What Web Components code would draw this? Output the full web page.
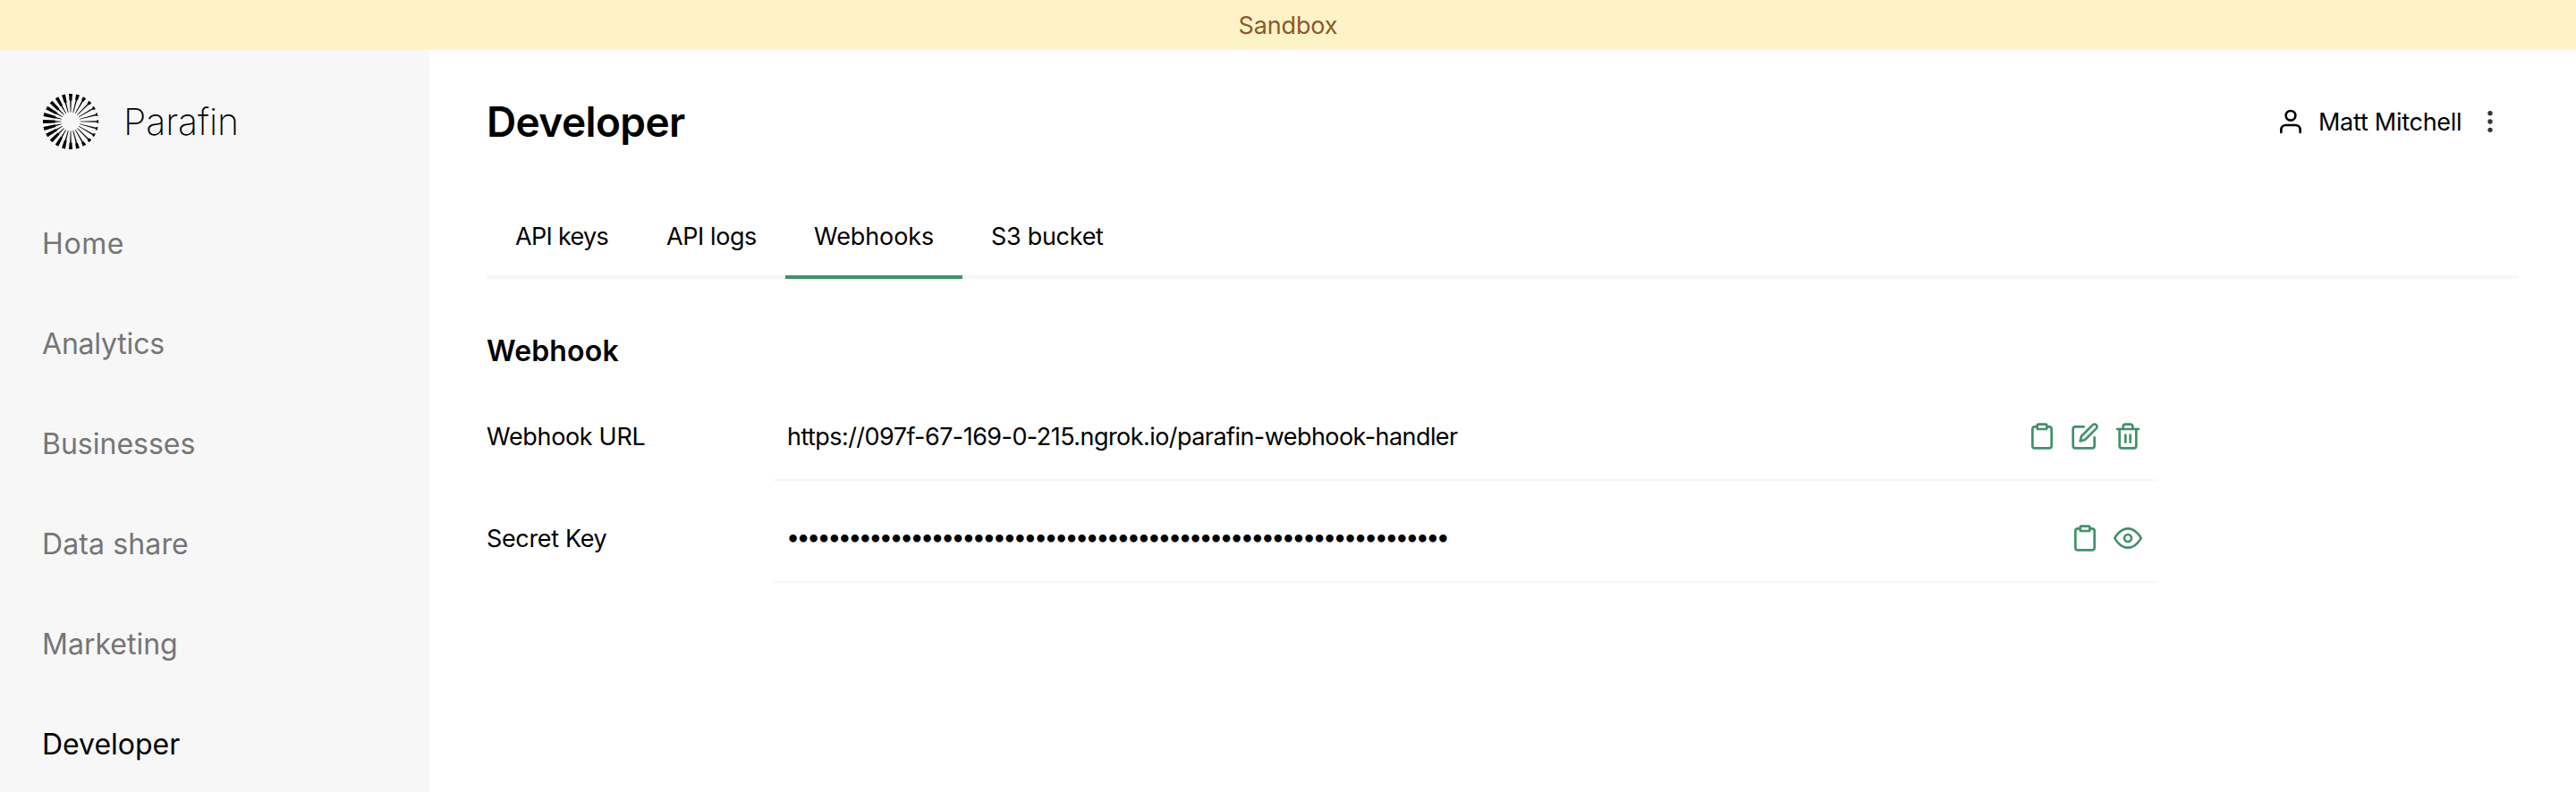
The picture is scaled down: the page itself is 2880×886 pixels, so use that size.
<!DOCTYPE html>
<html lang="en">
<head>
<meta charset="utf-8">
<title>Parafin – Developer</title>
<style>
  html, body { margin: 0; height: 100%; background: #fff; }
  body { font-family: Inter, "Liberation Sans", sans-serif; font-size: 27px; color: #000; overflow: hidden; }
</style>
</head>
<body>
<app-shell>
  <sandbox-banner slot="banner">Sandbox</sandbox-banner>
  <side-bar slot="sidebar">
    <brand-logo slot="brand">Parafin</brand-logo>
    <nav-item style="letter-spacing:.6px">Home</nav-item>
    <nav-item style="letter-spacing:-.2px">Analytics</nav-item>
    <nav-item>Businesses</nav-item>
    <nav-item style="letter-spacing:.12px">Data share</nav-item>
    <nav-item style="letter-spacing:0">Marketing</nav-item>
    <nav-item active style="letter-spacing:-.02px">Developer</nav-item>
  </side-bar>
  <page-header>Developer<user-menu slot="user">Matt Mitchell</user-menu></page-header>
  <tab-bar>
    <tab-item style="width:169px;letter-spacing:-.7px">API keys</tab-item>
    <tab-item style="width:165px;letter-spacing:-.42px">API logs</tab-item>
    <tab-item active style="width:198px;letter-spacing:-.1px">Webhooks</tab-item>
    <tab-item style="width:190px;letter-spacing:-.3px">S3 bucket</tab-item>
  </tab-bar>
  <detail-section>
    <span slot="title">Webhook</span>
    <detail-row>
      <span slot="label" style="letter-spacing:-.33px">Webhook URL</span>
      <span style="letter-spacing:-.556px">https://097f-67-169-0-215.ngrok.io/parafin-webhook-handler</span>
      <line-icon slot="actions" name="clipboard"></line-icon>
      <line-icon slot="actions" name="edit"></line-icon>
      <line-icon slot="actions" name="trash"></line-icon>
    </detail-row>
    <detail-row>
      <span slot="label" style="letter-spacing:-.35px">Secret Key</span>
      <secret-value length="64"></secret-value>
      <line-icon slot="actions" name="clipboard"></line-icon>
      <line-icon slot="actions" name="eye"></line-icon>
    </detail-row>
  </detail-section>
</app-shell>

<script>
const define = (name, html, setup) => {
  const template = document.createElement('template');
  template.innerHTML = html;
  customElements.define(name, class extends HTMLElement {
    connectedCallback() {
      if (this.shadowRoot) return;
      const root = this.attachShadow({ mode: 'open' });
      root.append(template.content.cloneNode(true));
      if (setup) setup(this, root);
    }
  });
};

define('app-shell', `
  <style>
    :host { display: grid; grid-template: 56px 1fr / 480px 1fr; height: 100vh; overflow: hidden; }
    .banner { grid-column: 1 / -1; }
    main { padding: 40px 64px 0; min-width: 0; }
  </style>
  <div class="banner"><slot name="banner"></slot></div>
  <slot name="sidebar"></slot>
  <main><slot></slot></main>`);

define('sandbox-banner', `
  <style>
    :host { display: flex; justify-content: center; height: 56px; line-height: 58px;
            background: #fdf3c7; color: #8a5a2b; letter-spacing: -.15px; }
  </style><slot></slot>`);

define('side-bar', `
  <style>
    :host { display: flex; flex-direction: column; background: #f7f7f7; padding: 0 47px; min-height: 0; }
    .brand { height: 160px; padding-left: 1px; }
    nav { display: flex; flex-direction: column; }
  </style>
  <div class="brand"><slot name="brand"></slot></div>
  <nav><slot></slot></nav>`);

define('brand-logo', `
  <style>
    :host { display: flex; align-items: center; gap: 28px; height: 160px;
            font-size: 41px; font-weight: 200; line-height: 1; letter-spacing: -.1px; }
    svg { display: block; width: 62px; height: 62px; flex: none; }
  </style>
  <svg viewBox="-31 -31 62 62"></svg><slot></slot>`,
  (host, root) => {
    // 24 rays: a hairline spoke with a heavy outer end, longest on the left side.
    const rays = [];
    for (let i = 0; i < 24; i++) {
      const a = i * 15;
      const inner = 31 - (7.6 - 6 * Math.cos(a * Math.PI / 180));
      rays.push(`<path transform="rotate(${a})" d="M10.5 -.35L${inner} -.75V-1.4L31 -2V2L${inner} 1.4V.75L10.5 .35Z"/>`);
    }
    root.querySelector('svg').innerHTML = rays.join('');
  });

define('nav-item', `
  <style>
    :host { display: block; height: 112px; line-height: 114px; font-size: 32px; color: #757575; }
    :host([active]) { color: #000; }
  </style><slot></slot>`);

define('page-header', `
  <style>
    :host { display: flex; justify-content: space-between; align-items: center; height: 80px; padding-right: 16px; }
    h1 { margin: 0; font-size: 46px; font-weight: 600; line-height: 80px; letter-spacing: -.6px; }
  </style>
  <h1><slot></slot></h1><slot name="user"></slot>`);

define('user-menu', `
  <style>
    :host { display: flex; align-items: center; height: 32px; line-height: 34px; }
    .name { width: 160px; height: 32px; margin: 0 16px 0 15px; letter-spacing: -.27px; white-space: nowrap; }
    .user { color: #000; }
    .more { color: #333; }
  </style>
  <line-icon class="user" name="user"></line-icon>
  <div class="name"><slot></slot></div>
  <line-icon class="more" name="more"></line-icon>`);

define('tab-bar', `
  <style>
    :host { display: flex; margin-top: 40px; height: 96px; box-shadow: inset 0 -4px #f7f7f7; }
  </style><slot></slot>`);

define('tab-item', `
  <style>
    :host { display: block; box-sizing: border-box; height: 96px; line-height: 98px; padding-left: 32px; white-space: nowrap; }
    :host([active]) { border-bottom: 4px solid #40916c; }
  </style><slot></slot>`);

define('detail-section', `
  <style>
    :host { display: block; width: 1867px; padding-top: 60px; }
    h2 { margin: 0; height: 52px; line-height: 42px; font-size: 32px; font-weight: 600; letter-spacing: .15px; }
  </style>
  <h2><slot name="title"></slot></h2><slot></slot>`);

define('detail-row', `
  <style>
    :host { display: grid; grid-template-columns: 320px 1fr; height: 114px; line-height: 34px; }
    .label { padding-top: 48px; }
    .value { display: flex; align-items: flex-start; height: 64px; padding: 48px 16px 0; border-bottom: 2px solid #f7f7f7; }
    .text { flex: 1; height: 32px; white-space: nowrap; }
    .actions { display: flex; gap: 16px; color: #40916c; }
  </style>
  <div class="label"><slot name="label"></slot></div>
  <div class="value"><div class="text"><slot></slot></div><div class="actions"><slot name="actions"></slot></div></div>`);

define('secret-value', `
  <style>
    :host { display: block; height: 32px; line-height: 30px; letter-spacing: -3.65px; margin-left: -1px; }
  </style><span></span>`,
  (host, root) => { root.querySelector('span').textContent = '•'.repeat(+host.getAttribute('length')); });

const ICONS = {
  user: '<path d="M20 21v-2a4 4 0 0 0-4-4H8a4 4 0 0 0-4 4v2"/><circle cx="12" cy="7" r="4"/>',
  more: '<circle cx="12" cy="12" r="1"/><circle cx="12" cy="5" r="1"/><circle cx="12" cy="19" r="1"/>',
  clipboard: '<path d="M16 4h2a2 2 0 0 1 2 2v14a2 2 0 0 1-2 2H6a2 2 0 0 1-2-2V6a2 2 0 0 1 2-2h2"/><rect x="8" y="2" width="8" height="4" rx="1" ry="1"/>',
  edit: '<path d="M11 4H4a2 2 0 0 0-2 2v14a2 2 0 0 0 2 2h14a2 2 0 0 0 2-2v-7"/><path d="M18.5 2.5a2.121 2.121 0 0 1 3 3L12 15l-4 1 1-4 9.5-9.5z"/>',
  trash: '<path d="M3 6h18"/><path d="M19 6v14a2 2 0 0 1-2 2H7a2 2 0 0 1-2-2V6m3 0V4a2 2 0 0 1 2-2h4a2 2 0 0 1 2 2v2"/><path d="M10 11v6M14 11v6"/>',
  eye: '<path d="M1 12s4-8 11-8 11 8 11 8-4 8-11 8-11-8-11-8z"/><circle cx="12" cy="12" r="3"/>'
};

define('line-icon', `
  <style>
    :host { display: block; width: 32px; height: 32px; flex: none; }
    svg { display: block; width: 32px; height: 32px; fill: none; stroke: currentColor;
          stroke-width: 2; stroke-linecap: round; stroke-linejoin: round; }
  </style><svg viewBox="0 0 24 24"></svg>`,
  (host, root) => {
    const name = host.getAttribute('name');
    const svg = root.querySelector('svg');
    svg.innerHTML = ICONS[name];
    if (name === 'more') svg.style.fill = 'currentColor';
  });
</script>
</body>
</html>
